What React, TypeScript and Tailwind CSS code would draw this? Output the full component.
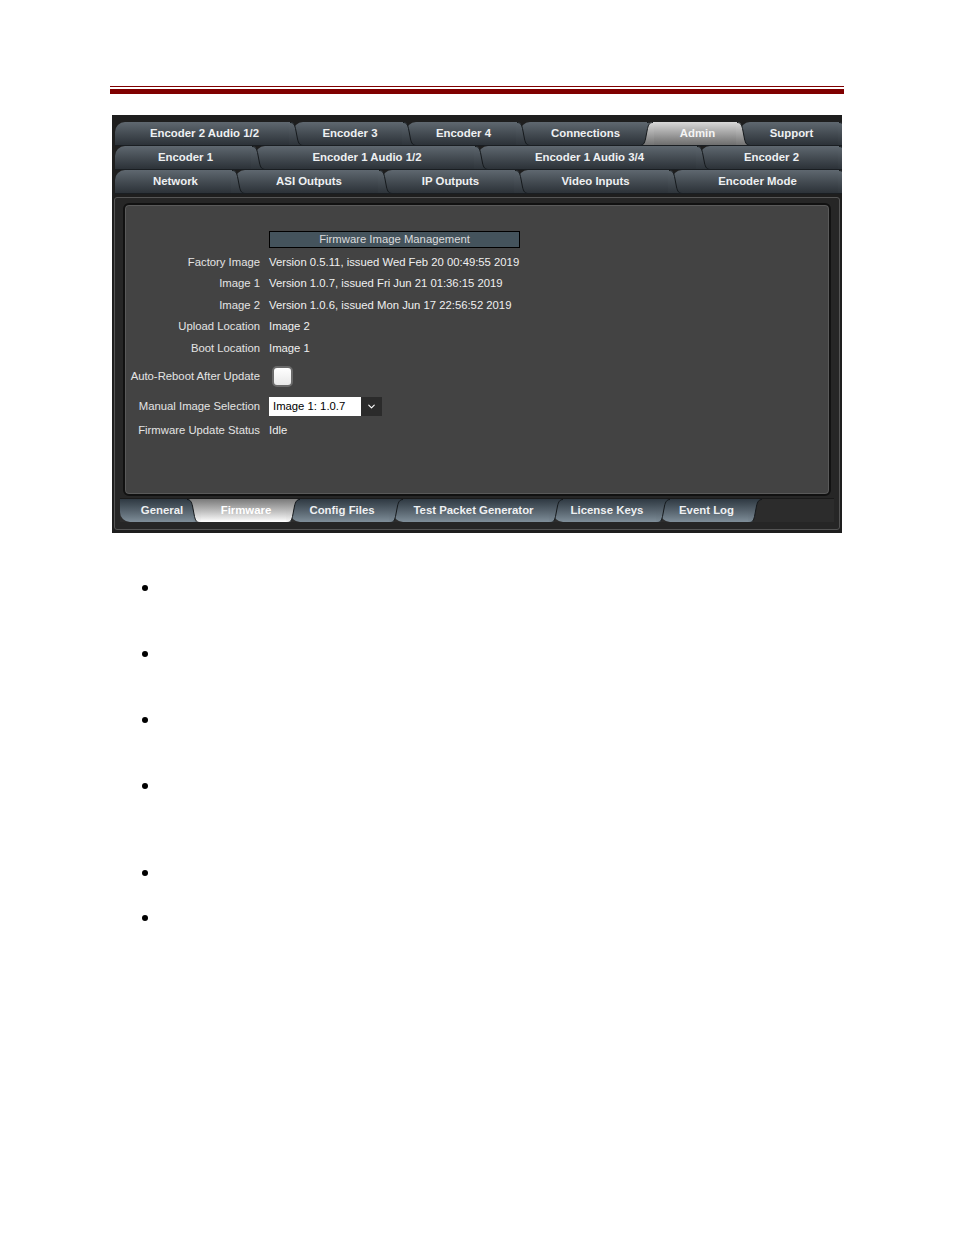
import React from 'react';
import { ChevronDown } from 'lucide-react';

type TabDef = { label: string; w: string; active?: boolean };

const topRows: TabDef[][] = [
  [
    { label: 'Encoder 2 Audio 1/2', w: 'w-[188px]' },
    { label: 'Encoder 3', w: 'w-[123px]' },
    { label: 'Encoder 4', w: 'w-[124px]' },
    { label: 'Connections', w: 'w-[140px]' },
    { label: 'Admin', w: 'w-[110px]', active: true },
    { label: 'Support', w: 'w-[112px]' },
  ],
  [
    { label: 'Encoder 1', w: 'w-[150px]' },
    { label: 'Encoder 1 Audio 1/2', w: 'w-[233px]' },
    { label: 'Encoder 1 Audio 3/4', w: 'w-[232px]' },
    { label: 'Encoder 2', w: 'w-[152px]' },
  ],
  [
    { label: 'Network', w: 'w-[130px]' },
    { label: 'ASI Outputs', w: 'w-[157px]' },
    { label: 'IP Outputs', w: 'w-[146px]' },
    { label: 'Video Inputs', w: 'w-[164px]' },
    { label: 'Encoder Mode', w: 'w-[180px]' },
  ],
];

const bottomTabs: TabDef[] = [
  { label: 'General', w: 'w-[87px]' },
  { label: 'Firmware', w: 'w-[113px]', active: true },
  { label: 'Config Files', w: 'w-[113px]' },
  { label: 'Test Packet Generator', w: 'w-[170px]' },
  { label: 'License Keys', w: 'w-[117px]' },
  { label: 'Event Log', w: 'w-[102px]' },
];

const zs = ['z-[10]', 'z-[9]', 'z-[8]', 'z-[7]', 'z-[6]', 'z-[5]'];

// curved side of a tab, light at y=0 and dark at y=24
const Wing: React.FC<{ id: string; light: string; dark: string; className?: string }> = ({ id, light, dark, className }) => (
  <svg width="14" height="24" viewBox="0 0 14 24" className={`shrink-0 block ${className ?? ''}`}>
    <defs>
      <linearGradient id={id} x1="0" y1="0" x2="0" y2="24" gradientUnits="userSpaceOnUse">
        <stop offset="0" stopColor={light} />
        <stop offset="1" stopColor={dark} />
      </linearGradient>
    </defs>
    <path d="M0 0 H1 C4.5 0 5.5 2.5 6.5 6.5 L8.5 17 C9.5 21.5 11 24 14 24 H0 Z" fill={`url(#${id})`} />
    <path d="M1 0.5 C4.5 0.5 5.5 2.5 6.5 6.5 L8.5 17 C9.5 21.5 11 23.5 14 23.5" fill="none" stroke="#15191c" strokeWidth="1" />
  </svg>
);

const Tab: React.FC<{ t: TabDef; i: number; bottom?: boolean }> = ({ t, i, bottom }) => {
  const shift = i === 0 ? '' : t.active ? '-ml-[20px]' : '-ml-[10px]';
  const z = t.active ? 'z-[20]' : zs[i];
  const flip = bottom ? '-scale-y-100' : '';
  let light = '#5f6870';
  let dark = '#2c3238';
  let body = 'bg-linear-to-b from-[#5f6870] to-[#2c3238] text-[#eef0f2]';
  if (bottom && t.active) {
    light = '#ffffff';
    dark = '#7a7a7a';
    body = 'bg-linear-to-t from-[#ffffff] to-[#7a7a7a] text-white';
  } else if (bottom) {
    light = '#7f8e99';
    dark = '#2f3942';
    body = 'bg-linear-to-t from-[#7f8e99] to-[#2f3942] text-[#eef0f2]';
  } else if (t.active) {
    light = '#d9d9d9';
    dark = '#6e6e6e';
    body = 'bg-linear-to-b from-[#d9d9d9] to-[#6e6e6e] text-[#f4f4f4]';
  }
  const id = `tab-${bottom ? 'b' : 't'}-${t.active ? 'a' : 'n'}`;
  const corner = t.active ? '' : bottom ? 'rounded-bl-[10px]' : 'rounded-tl-[10px]';
  const pad = bottom && i === 0 ? 'pl-[11px]' : 'pl-[5px]';
  return (
    <div className={`relative flex h-full shrink-0 ${t.w} ${shift} ${z}`}>
      {t.active && <Wing id={id} light={light} dark={dark} className={`-scale-x-100 ${flip}`} />}
      <div className={`flex flex-1 items-center justify-center whitespace-nowrap pt-[1px] text-[11.4px] font-bold ${pad} ${corner} ${body}`}>
        {t.label}
      </div>
      <Wing id={id} light={light} dark={dark} className={flip} />
    </div>
  );
};

const Row: React.FC<{ label: string; h?: string; children: React.ReactNode }> = ({ label, h, children }) => (
  <div className={`flex items-center pt-[1px] ${h ?? 'h-[21.5px]'}`}>
    <div className="w-[135px] whitespace-nowrap text-right text-[11.3px] text-[#e4e4e4]">{label}</div>
    <div className="ml-[9px] flex items-center whitespace-nowrap text-[11.3px] text-[#f0f0f0]">{children}</div>
  </div>
);

export default function App() {
  return (
    <div className="min-h-[1235px] bg-white font-['Liberation_Sans',Arial,sans-serif]">
      <div className="pl-[110px] pt-[86px]">
        {/* red rule */}
        <div className="w-[734px]">
          <div className="h-px bg-[#7f0000]"></div>
          <div className="mt-[2px] h-[5px] bg-[#800000]"></div>
        </div>

        {/* screenshot panel */}
        <div className="ml-[2px] mt-[21px] w-[730px] overflow-hidden bg-[#1e1e1e] pb-[3px] pt-[7px]">
          <div className="pl-[3px]">
            {topRows.map((row, r) => (
              <div key={r} className="relative flex h-[24px] overflow-hidden border-b border-[#1a1e22]">
                {row.map((t, i) => (
                  <Tab key={t.label} t={t} i={i} />
                ))}
              </div>
            ))}
          </div>

          <div className="mx-[2px] mt-[3px] rounded-[3px] border border-[#555] bg-[#262626] px-[5px] pb-[7px] pt-[5px]">
            <div className="mx-[3px] h-[293px] rounded-[6px] border-2 border-[#111] bg-[#434343] pt-[26px] shadow-[inset_0_0_0_1px_#5a5a5a]">
              <div className="ml-[144px] h-[17px] w-[251px] border border-black bg-[#44535c] text-center text-[11.3px] leading-[15px] text-[#dcdcdc]">
                Firmware Image Management
              </div>
              <div className="mt-[3px]">
                <Row label="Factory Image">Version 0.5.11, issued Wed Feb 20 00:49:55 2019</Row>
                <Row label="Image 1">Version 1.0.7, issued Fri Jun 21 01:36:15 2019</Row>
                <Row label="Image 2">Version 1.0.6, issued Mon Jun 17 22:56:52 2019</Row>
                <Row label="Upload Location">Image 2</Row>
                <Row label="Boot Location">Image 1</Row>
                <Row label="Auto-Reboot After Update" h="h-[34px]">
                  <div className="ml-[3px] h-[21px] w-[21px] rounded-[5px] border-2 border-[#6a6a6a] bg-linear-to-b from-[#ffffff] to-[#e8e8e8]"></div>
                </Row>
                <Row label="Manual Image Selection" h="h-[26px]">
                  <div className="flex h-[19px] w-[113px]">
                    <div className="flex flex-1 items-center bg-white pl-[4px] text-[11.3px] text-black">Image 1: 1.0.7</div>
                    <div className="flex w-[21px] items-center justify-center bg-[#2b2b2b]">
                      <ChevronDown className="h-[11px] w-[11px] text-white" strokeWidth={2.5} />
                    </div>
                  </div>
                </Row>
                <Row label="Firmware Update Status" h="h-[23px]">Idle</Row>
              </div>
            </div>

            <div className="relative mt-[2px] flex h-[24px] overflow-hidden border-t border-[#1a1a1a] bg-[#2c2c2c]">
              {bottomTabs.map((t, i) => (
                <Tab key={t.label} t={t} i={i} bottom />
              ))}
            </div>
          </div>
        </div>

        {/* bullets */}
        <div className="ml-[32px] mt-[52px] flex flex-col">
          {['h-[66px]', 'h-[66px]', 'h-[66px]', 'h-[87px]', 'h-[45px]', 'h-[6px]'].map((h, i) => (
            <div key={i} className={h}>
              <div className="h-[6px] w-[6px] rounded-full bg-black"></div>
            </div>
          ))}
        </div>
      </div>
    </div>
  );
}
